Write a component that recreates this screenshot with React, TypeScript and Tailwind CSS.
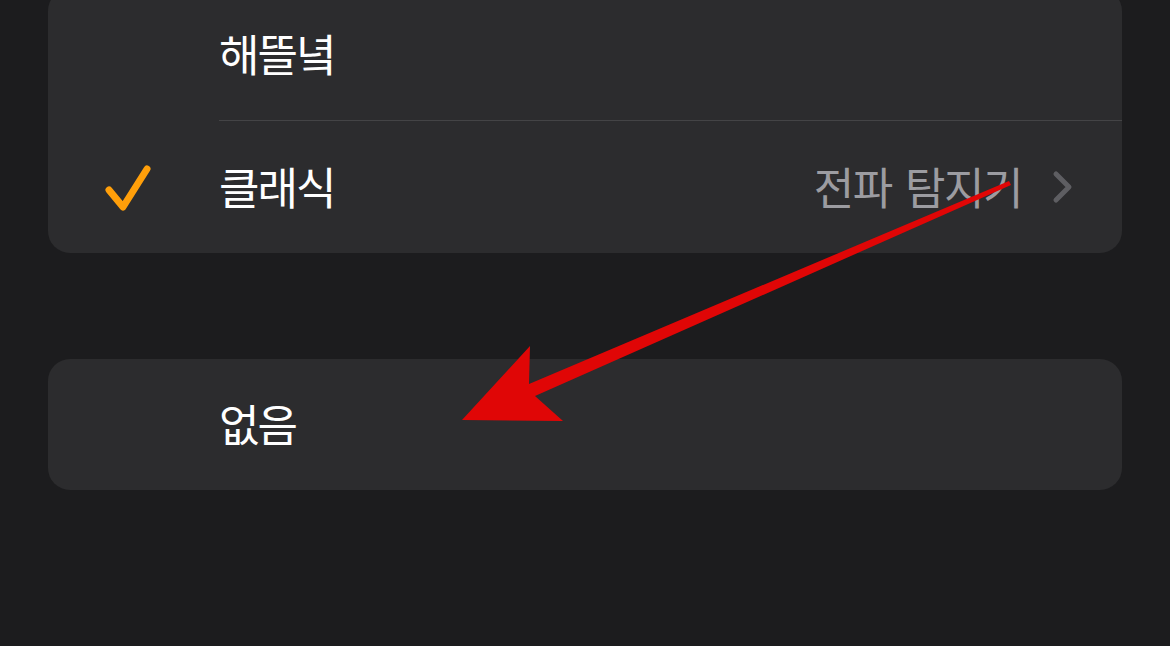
import React from "react";

const font = { fontFamily: '"Noto Sans CJK KR", "Noto Sans", sans-serif' };

function Check() {
  return (
    <svg width="56" height="56" viewBox="0 0 56 56" fill="none">
      <path
        d="M9 31 L23 48 L47 10"
        stroke="#ff9f0a"
        strokeWidth="7"
        strokeLinecap="round"
        strokeLinejoin="round"
      />
    </svg>
  );
}

function Chevron() {
  return (
    <svg width="22" height="34" viewBox="0 0 22 34" fill="none">
      <path
        d="M4 4 L17 17 L4 30"
        stroke="#5e5e62"
        strokeWidth="5"
        strokeLinecap="round"
        strokeLinejoin="round"
      />
    </svg>
  );
}

function Row({
  label,
  checked,
  detail,
  divider,
  className = "",
}: {
  label: string;
  checked?: boolean;
  detail?: string;
  divider?: boolean;
  className?: string;
}) {
  return (
    <div className={`flex items-stretch ${className}`}>
      <div className="flex w-[171px] shrink-0 items-center pl-[52px]">
        {checked && <Check />}
      </div>
      <div
        className={`flex flex-1 items-center pr-[48px] ${
          divider ? "border-b border-[#444446]" : ""
        }`}
      >
        <span className="mt-[-3px] flex-1 text-[44px] tracking-[-2px] text-white">{label}</span>
        {detail && (
          <div className="flex items-center gap-[30px]">
            <span className="mt-[-3px] text-[44px] tracking-[-1.5px] text-[#9c9ca1] [word-spacing:5px]">
              {detail}
            </span>
            <Chevron />
          </div>
        )}
      </div>
    </div>
  );
}

export default function App() {
  return (
    <div className="relative h-[646px] w-[1170px] overflow-hidden bg-[#1c1c1e]" style={font}>
      <div className="flex flex-col px-[48px]">
        <div className="mt-[-11px] flex flex-col rounded-[22px] bg-[#2c2c2e]">
          <Row label="해뜰녘" divider className="h-[132px]" />
          <Row label="클래식" checked detail="전파 탐지기" className="h-[132px]" />
        </div>
        <div className="mt-[106px] flex flex-col rounded-[22px] bg-[#2c2c2e]">
          <Row label="없음" className="h-[131px]" />
        </div>
      </div>

      <svg className="pointer-events-none absolute left-0 top-0" width="1170" height="646">
        <polygon
          points="1009,181 1011,185 535,396 563,421 462,420 530,346 529,384"
          fill="#e00606"
        />
      </svg>
    </div>
  );
}
